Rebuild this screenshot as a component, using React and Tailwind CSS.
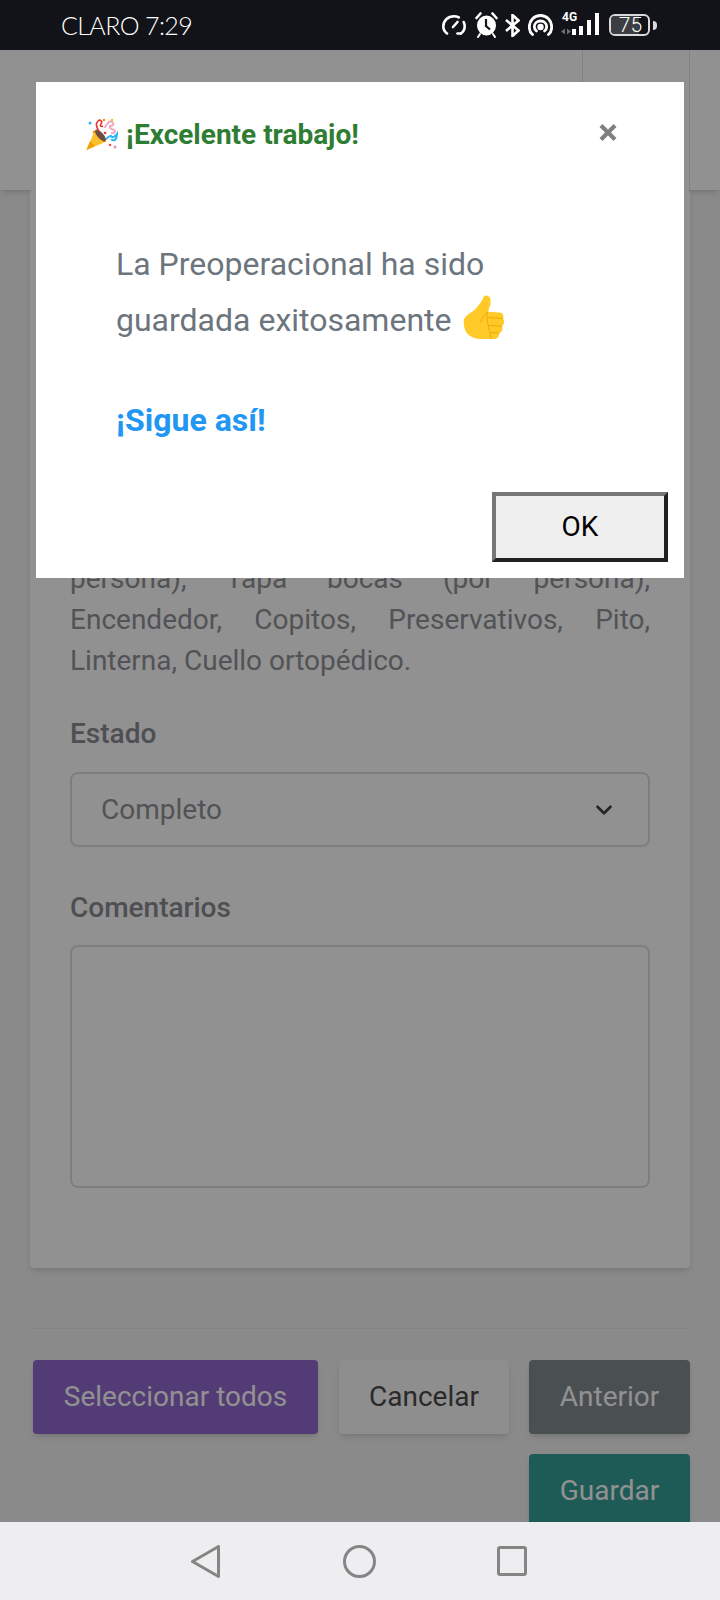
import { ChevronDown } from 'lucide-react';

function StatusIcons() {
    return (
        <div className="flex items-center text-white">
            <svg width="24" height="20" viewBox="0 0 24 20" fill="none" stroke="currentColor" strokeWidth="2.600" strokeLinecap="round" className="mr-[9px]">
                <path d="M5 18.500C2.600 16.800 1.300 14.200 1.300 11.300 1.300 5.800 5.800 1.300 12 1.300c1.800 0 3.400.4 4.800 1.100" />
                <path d="M21.700 7c.6 1.300 1 2.800 1 4.300 0 2.900-1.300 5.500-3.700 7.200" />
                <path d="M11 12 15.500 7" />
                <path d="M15.500 18.500h3" />
            </svg>
            <svg width="23" height="26" viewBox="0 0 23 26" className="mr-[7px]">
                <path d="M1.500 6 5.500 1.500M21.500 6 17.500 1.500" stroke="currentColor" strokeWidth="2.600" strokeLinecap="round" />
                <path d="M5 22 3 25M18 22l2 3" stroke="currentColor" strokeWidth="2" strokeLinecap="round" />
                <ellipse cx="11.500" cy="13.500" rx="9.500" ry="10" fill="currentColor" />
                <path d="M11 7V14L15 17.500" fill="none" stroke="#111318" strokeWidth="2.200" />
            </svg>
            <svg width="15" height="23" viewBox="0 0 15 23" fill="none" stroke="currentColor" strokeWidth="2.600" className="mr-[8px]">
                <path d="M1 6 13.500 16.500 7.500 22V1l6 5.500L1 17" />
            </svg>
            <svg width="25" height="22" viewBox="0 0 25 22" fill="none" stroke="currentColor" strokeWidth="2.800" strokeLinecap="round" className="mr-[8px]">
                <path d="M4.500 20.500C2.300 18.600 1.300 16 1.300 13 1.300 6.500 6.300 1.500 12.500 1.500S23.700 6.500 23.700 13c0 3-1 5.600-3.200 7.500" />
                <path d="M8.500 17C7 15.800 6.300 14.300 6.300 12.800 6.300 9.500 9 7 12.500 7s6.200 2.500 6.200 5.800c0 1.500-.7 3-2.200 4.200" />
                <circle cx="12.500" cy="13" r="1.800" fill="currentColor" />
            </svg>
            <div className="relative w-[39px] h-[24px] mr-[9px]">
                <span className="absolute left-[1px] top-[-2px] text-[12px] leading-[12px] font-bold">4G</span>
                <svg width="39" height="24" viewBox="0 0 39 24" className="absolute left-0 top-0">
                    <path d="M0 18.500 4 15.500V21.500ZM10 18.500 6 15.500V21.500Z" fill="#6b6d70" />
                    <rect x="11" y="16" width="4" height="6" fill="currentColor" />
                    <rect x="18" y="13" width="4" height="9" fill="currentColor" />
                    <rect x="26" y="7" width="4" height="15" fill="currentColor" />
                    <rect x="34" y="0" width="4" height="22" fill="currentColor" />
                </svg>
            </div>
            <div className="relative flex items-center justify-center w-[41px] h-[22px] mr-[3px] pl-[2px] overflow-hidden rounded-[6px] border-2 border-[#d9d9da] text-[21px] leading-none font-light">
                <div className="absolute inset-y-0 left-0 w-[75%] bg-[#3c3e42]"></div>
                <span className="relative">75</span>
            </div>
            <div className="w-[4px] h-[9px] rounded-r-sm bg-[#d9d9da]"></div>
        </div>
    );
}

function PartyPopper() {
    return (
        <svg width="32" height="33" viewBox="0 0 32 33" className="shrink-0">
            <path d="M0.500 32 9 12 20.500 23.500Z" fill="#fbc02d" />
            <path d="M0.500 32 4 23 9 28Z" fill="#f59f00" />
            <ellipse cx="14.500" cy="17.500" rx="3" ry="7.500" transform="rotate(-42 14.500 17.500)" fill="#6d4c41" />
            <path d="M13 13C10 9 9 6 12 3 14 1 17 3 15 6 13.500 8 15 9 17 8" fill="none" stroke="#e53935" strokeWidth="1.600" />
            <path d="M19 10c0-3 2-3 3-5 1-2 4-2 5 0 1 2-1 3-3 3-1 3 2 3 4 4 2 2 0 4-3 3" fill="none" stroke="#f4a7c0" strokeWidth="2" />
            <path d="M20 21c2-1 2-3 5-3 1 2 4 1 6-2 0 3-1 5-2 6-2 1-3-1-4 0" fill="none" stroke="#29b6f6" strokeWidth="2" />
            <circle cx="4" cy="5" r="1.500" fill="#29b6f6" />
            <circle cx="8" cy="14" r="1.300" fill="#fb8c00" />
            <circle cx="26" cy="2" r="1.300" fill="#fbc02d" />
            <circle cx="18" cy="2" r="1.200" fill="#fb8c00" />
            <circle cx="19" cy="15" r="1.300" fill="#e53935" />
            <circle cx="29" cy="29" r="1.500" fill="#f48fb1" />
            <circle cx="24" cy="27" r="1.300" fill="#ef5350" />
        </svg>
    );
}

function ThumbsUp() {
    return (
        <svg width="42" height="45" viewBox="0 0 43 46" className="shrink-0 -translate-y-[3px]">
            <path d="M1 25C3 20 9 18 13 14 17 9 20 6 21 2 22-.5 27 0 28 4 29 9 27 13 25.500 17L37 18C41 18 42 21 41 24 43 27 42 30 40 32 41 35 40 38 37 39 37 43 35 45 31 45H17C12 45 9 43 6 41 2 38 0 31 1 25Z" fill="#ffca28" />
            <path d="M26 23 41 24M27 31 40 32M28 38.500 37 39" fill="none" stroke="#f2a600" strokeWidth="1" />
            <path d="M25.500 17C24 19 24.500 28 26 31 26 34 27 37 28 38.500 27.500 41 28 43 29 45" fill="none" stroke="#f2a600" strokeWidth="1" />
            <path d="M25.500 17C21 21 19 25 18 28" fill="none" stroke="#f2a600" strokeWidth="1" />
        </svg>
    );
}

function NavBar() {
    return (
        <div className="flex items-center h-[78px] shrink-0 bg-[#eeeef0] pl-[191px]">
            <svg width="29" height="33" viewBox="0 0 29 33" fill="none" stroke="#858585" strokeWidth="3" strokeLinejoin="round" className="mr-[123px]">
                <path d="M27.500 1.500V31.500L1.500 16.500Z" />
            </svg>
            <svg width="33" height="33" viewBox="0 0 33 33" fill="none" stroke="#858585" strokeWidth="3" className="mr-[121px]">
                <circle cx="16.500" cy="16.500" r="15" />
            </svg>
            <svg width="30" height="30" viewBox="0 0 30 30" fill="none" stroke="#858585" strokeWidth="3">
                <rect x="1.500" y="1.500" width="27" height="27" rx="1.500" />
            </svg>
        </div>
    );
}

export default function App() {
    return (
        <div className="flex flex-col w-[720px] h-[1600px] overflow-hidden font-[Roboto,sans-serif]">
            <div className="flex items-center justify-between h-[50px] shrink-0 bg-[#111318] pl-[61px] pr-[63px] text-white">
                <div className="text-[25px] font-light tracking-[-0.6px] leading-none font-[Lato,sans-serif]">CLARO 7:29</div>
                <StatusIcons />
            </div>

            <div className="relative flex-1 overflow-hidden bg-[#f2f2f3]">
                {/* page behind the dialog */}
                <div className="flex justify-end h-[140px] bg-white shadow-md">
                    <div className="w-[108px] mr-[30px] border-x border-gray-200"></div>
                </div>

                <div className="flex flex-col justify-end h-[1078px] mx-[30px] px-[40px] pb-[80px] bg-white rounded shadow-md">
                    <div className="text-[28px] leading-[41px] text-[#909398]">
                        <p className="text-justify [text-align-last:justify]">persona), Tapa bocas (por persona),</p>
                        <p className="text-justify [text-align-last:justify]">Encendedor, Copitos, Preservativos, Pito,</p>
                        <p>Linterna, Cuello ortopédico.</p>
                    </div>
                    <label className="block mt-[38px] text-[28px] leading-[30px] font-medium text-[#888c91]">Estado</label>
                    <div className="flex items-center justify-between h-[75px] mt-[23px] pl-[29px] pr-[31px] border-2 border-[#dcdee0] rounded-lg text-[28px] text-[#909398]">
                        <span>Completo</span>
                        <ChevronDown size={26} strokeWidth={2.500} className="text-[#444]" />
                    </div>
                    <label className="block mt-[46px] text-[28px] leading-[30px] font-medium text-[#888c91]">Comentarios</label>
                    <div className="h-[243px] mt-[22px] border-2 border-[#dcdee0] rounded-lg"></div>
                </div>

                <div className="mt-[60px] mx-[30px] border-t border-gray-200"></div>

                <div className="flex flex-wrap justify-end gap-x-[20px] gap-y-[20px] mt-[31px] px-[30px] text-[28px]">
                    <button className="w-[285px] h-[74px] mr-[1px] rounded bg-[#9268cf] text-white shadow-md">Seleccionar todos</button>
                    <button className="w-[170px] h-[74px] rounded bg-[#f9f9fa] text-[#4a4a4a] shadow-md">Cancelar</button>
                    <button className="w-[161px] h-[74px] rounded bg-[#828b90] text-white shadow-md">Anterior</button>
                    <button className="w-[161px] h-[74px] rounded bg-[#35a197] text-white shadow-md">Guardar</button>
                </div>

                {/* overlay + dialog */}
                <div className="absolute inset-0 bg-black/43"></div>
                <div className="absolute left-[36px] top-[32px] w-[648px] h-[496px] flex flex-col bg-white">
                    <div className="flex items-start justify-between pt-[36px] pl-[50px] pr-[67px]">
                        <div className="flex items-center gap-[8px]">
                            <PartyPopper />
                            <span className="text-[28px] leading-[32px] font-bold text-[#2e7d32]">¡Excelente trabajo!</span>
                        </div>
                        <svg width="18" height="17" viewBox="0 0 18 17" className="mt-[6px]" stroke="#808080" strokeWidth="4.200" fill="none">
                            <path d="M2 1.500 16 15.500M16 1.500 2 15.500" />
                        </svg>
                    </div>

                    <div className="pl-[80px] mt-[85px] text-[32px] leading-[56px] text-[#6c757d]">
                        <p>La Preoperacional ha sido</p>
                        <p className="flex items-center gap-[11px]">guardada exitosamente <ThumbsUp /></p>
                        <p className="mt-[44px] font-bold text-[#2196f3]">¡Sigue así!</p>
                    </div>

                    <div className="flex justify-end mt-auto pr-[16px] pb-[16px]">
                        <button className="w-[176px] h-[70px] bg-[#efefef] border-4 border-t-[#767676] border-l-[#767676] border-b-[#212121] border-r-[#212121] text-[28px] text-black">OK</button>
                    </div>
                </div>
            </div>

            <NavBar />
        </div>
    );
}
